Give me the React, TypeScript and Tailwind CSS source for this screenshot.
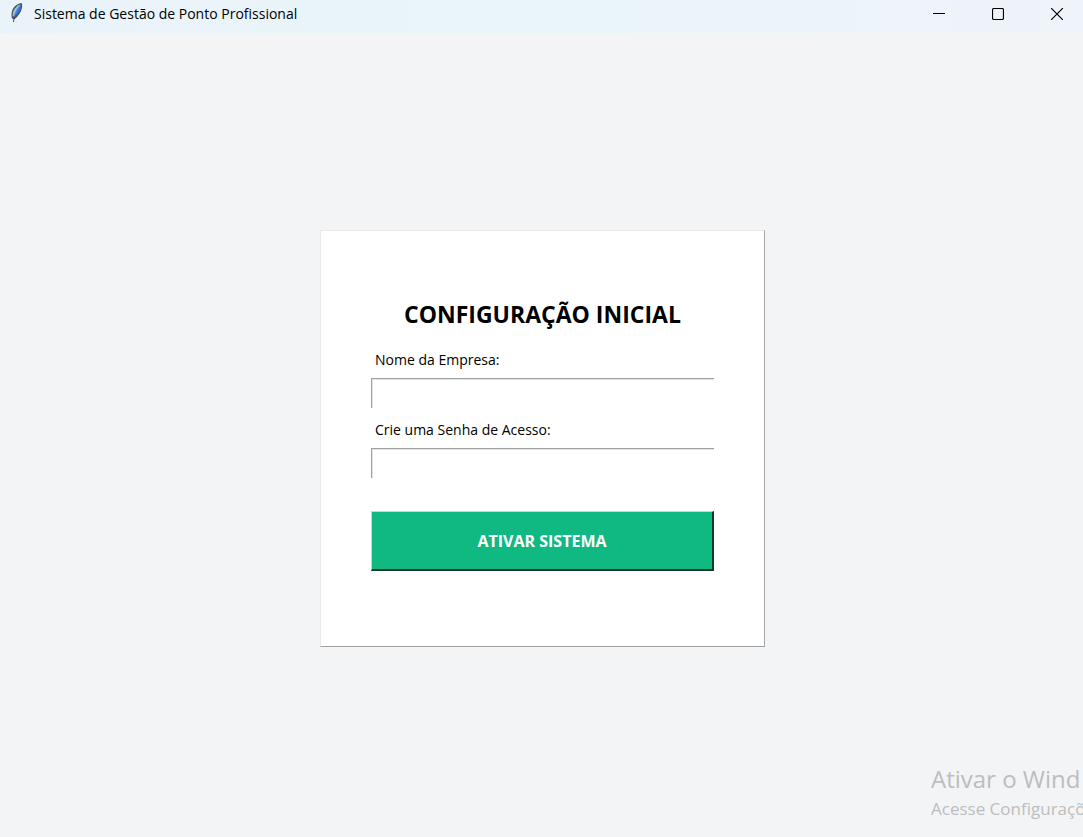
import { useState } from 'react'

const INPUT_CLASS =
  'block h-[30px] w-full border-t border-l border-[#a0a0a0] bg-white px-1 text-sm shadow-[inset_1px_1px_0_#e3e3e3] focus:outline-none'

function FeatherIcon() {
  return (
    <svg width="16" height="20" viewBox="0 0 16 20" aria-hidden="true">
      <path d="M13.5 0C9.5 0.6 5.5 3.6 4.2 7.5C3.4 10.3 3.2 13 4 15.5L6.5 16.2C10 13.8 13 9.5 14 4.8C14.3 2.8 14.2 1 13.5 0Z" fill="#4a4f58" />
      <path d="M12.8 1.2C9.5 2.2 6.4 5 5.3 8.3C4.6 10.6 4.5 12.5 5 14C7.8 11 10.8 6.5 12.8 1.2Z" fill="#a3c0e0" />
      <path d="M12.9 1.4C11 5.5 8.6 9.5 5.4 14.4C9.6 12.2 12.6 8.4 13.2 4.2Z" fill="#2f6fd0" />
      <path d="M12.6 1.4C9.2 4.4 7 8.6 5.8 13.4C8.6 10.4 11.4 6 12.6 1.4Z" fill="#4d86d6" />
      <path d="M6.4 14L5.4 19" fill="none" stroke="#4b4b4b" />
    </svg>
  )
}

function TitleBar() {
  return (
    <header className="flex h-[33px] items-start justify-between bg-linear-to-r from-[#eaf3fa] via-[#e9f5f9] to-[#eff3fa] pl-2">
      <div className="flex items-start gap-[10px] pt-[3px]">
        <FeatherIcon />
        <span className="text-sm leading-[22px] text-black">Sistema de Gestão de Ponto Profissional</span>
      </div>
      <div className="flex gap-[7px]">
        <button type="button" aria-label="Minimizar" className="flex h-7 w-[52px] items-center justify-center">
          <svg width="12" height="12" viewBox="0 0 12 12"><path d="M0 5.5H12" stroke="#000" /></svg>
        </button>
        <button type="button" aria-label="Maximizar" className="flex h-7 w-[52px] items-center justify-center">
          <svg width="12" height="12" viewBox="0 0 12 12"><rect x="0.5" y="0.5" width="11" height="11" rx="1.5" fill="none" stroke="#000" strokeWidth="1.2" /></svg>
        </button>
        <button type="button" aria-label="Fechar" className="flex h-7 w-[52px] items-center justify-center">
          <svg width="12" height="12" viewBox="0 0 12 12"><path d="M0 0L12 12M12 0L0 12" stroke="#000" strokeWidth="1.2" /></svg>
        </button>
      </div>
    </header>
  )
}

export default function App() {
  const [empresa, setEmpresa] = useState('')
  const [senha, setSenha] = useState('')

  function handleSubmit(e: React.FormEvent) {
    e.preventDefault()
  }

  return (
    <div className="relative flex min-h-screen flex-col overflow-hidden bg-[#f3f4f6] font-['Open_Sans','Noto_Sans',sans-serif]">
      <TitleBar />

      <main className="flex flex-1 items-center justify-center pt-[7px] pl-0.5">
        <form
          onSubmit={handleSubmit}
          className="w-full max-w-[445px] border border-t-[#e8e8e8] border-r-[#a8a8a8] border-b-[#a0a0a0] border-l-[#e8e8e8] bg-white px-[50px] pt-[67px] pb-[75px]"
        >
          <h1 className="text-center text-[23px] leading-8 font-bold text-black">CONFIGURAÇÃO INICIAL</h1>

          <label htmlFor="empresa" className="mt-5 mb-2 block px-1 text-sm leading-5 text-black">Nome da Empresa:</label>
          <input id="empresa" value={empresa} onChange={e => setEmpresa(e.target.value)} className={INPUT_CLASS} />

          <label htmlFor="senha" className="mt-3 mb-2 block px-1 text-sm leading-5 text-black">Crie uma Senha de Acesso:</label>
          <input id="senha" type="password" value={senha} onChange={e => setSenha(e.target.value)} className={INPUT_CLASS} />

          <button
            type="submit"
            className="mt-[33px] h-[60px] w-full border-t border-r-2 border-b-2 border-l border-t-[#8ff5cc] border-r-[#14382c] border-b-[#14382c] border-l-[#8ff5cc] bg-[#10b981] text-base font-bold text-white"
          >
            ATIVAR SISTEMA
          </button>
        </form>
      </main>

      {/* aviso do Windows, por cima da janela */}
      <div className="pointer-events-none absolute right-0 bottom-4 w-[152px] overflow-hidden whitespace-nowrap text-[#bcbdbf]">
        <p className="text-2xl leading-9">Ativar o Wind</p>
        <p className="text-[17px] leading-6">Acesse Configuraçõ</p>
      </div>
    </div>
  )
}
